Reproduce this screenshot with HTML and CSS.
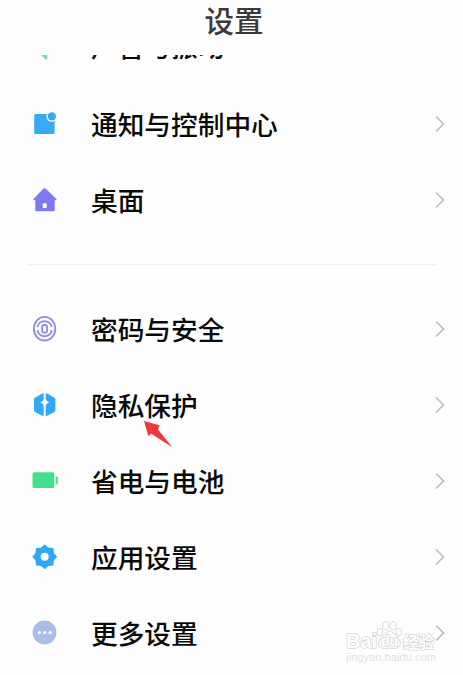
FILE: index.html
```html
<!DOCTYPE html>
<html lang="zh-CN">
  <head>
    <meta charset="UTF-8" />
    <title>设置</title>
    <link rel="stylesheet" href="styles.css">
  </head>
  <body>
    <header class="app-header">
      <h1 class="app-title">设置</h1>
    </header>

    <main class="settings">
      <div class="row row-scrolled">
        <svg class="icon" viewBox="0 0 30 30"><path fill="#6be3a0" d="M3 11h5l9-8v23.500q-1 .6-1.800-.2L9.500 20H3z" /></svg>
        <span class="label">声音与振动</span>
      </div>
      <div class="row">
        <svg class="icon" viewBox="0 0 30 30">
          <rect x="4.200" y="5" width="20.400" height="20" rx="1.500" fill="#38a9f5" />
          <circle cx="21.800" cy="7.400" r="5.400" fill="#fff" />
          <circle cx="21.800" cy="7.400" r="4.200" fill="#38a9f5" />
        </svg>
        <span class="label">通知与控制中心</span>
        <svg class="chevron" viewBox="0 0 10 18"><path d="M1 1.500 8.500 9 1 16.500" /></svg>
      </div>
      <div class="row">
        <svg class="icon" viewBox="0 0 30 30">
          <path fill="#7c79f2" d="M13.500 3.600q1-.8 2 0L26.500 14q.6 1.200-.8 1.200h-1V25q0 1.300-1.300 1.300H6.600Q5.300 26.300 5.300 25v-9.800h-1q-1.600 0-.8-1.200z" />
          <rect x="12.700" y="18.300" width="4" height="4.700" rx=".8" fill="#fff" />
        </svg>
        <span class="label">桌面</span>
        <svg class="chevron" viewBox="0 0 10 18"><path d="M1 1.500 8.500 9 1 16.500" /></svg>
      </div>

      <hr class="divider" />

      <div class="row">
        <svg class="icon" viewBox="0 0 30 30" fill="none" stroke="#958fdf">
          <ellipse cx="14.600" cy="14.700" rx="10.700" ry="11.800" stroke-width="1.900" />
          <path stroke-width="1.900" d="M7.500 13.200C8.200 5.200 21 5.200 21.700 13.200M7.500 16.200C8.200 24.200 21 24.200 21.700 16.200" />
          <rect x="12.100" y="10.700" width="5" height="8" rx="2.500" stroke-width="2" />
        </svg>
        <span class="label">密码与安全</span>
        <svg class="chevron" viewBox="0 0 10 18"><path d="M1 1.500 8.500 9 1 16.500" /></svg>
      </div>
      <div class="row">
        <svg class="icon" viewBox="0 0 30 30">
          <path fill="#2fa9f4" d="M13.700 3.200v5.500q-.5 3-3.500 3.800 3 .8 3.500 3.800v10.200L5 21.900q-1-.6-1-1.800V9.600q0-1.200 1-1.800l6.700-4.100z" />
          <path fill="#2fa9f4" d="M15.700 3.200v5.500q.5 3 3.500 3.800-3 .8-3.500 3.800v10.200l8.700-4.600q1-.6 1-1.800V9.600q0-1.200-1-1.800l-6.700-4.100z" />
        </svg>
        <span class="label">隐私保护</span>
        <svg class="chevron" viewBox="0 0 10 18"><path d="M1 1.500 8.500 9 1 16.500" /></svg>
        <svg class="pointer" viewBox="0 0 30 28"><path d="M1 1 16.500 5.300 15 9.500 29.300 27.200 8.300 13.700 5.300 16z" /></svg>
      </div>
      <div class="row">
        <svg class="icon" viewBox="0 0 30 30" fill="#45df8b">
          <rect x="2.500" y="6.200" width="21.700" height="15.800" rx="1.500" />
          <rect x="25.700" y="10.400" width="2" height="8" rx=".8" />
        </svg>
        <span class="label">省电与电池</span>
        <svg class="chevron" viewBox="0 0 10 18"><path d="M1 1.500 8.500 9 1 16.500" /></svg>
      </div>
      <div class="row">
        <svg class="icon" viewBox="0 0 30 30">
          <path fill="#32a6f3" stroke="#32a6f3" stroke-width="1.500" stroke-linejoin="round" d="M14.700 3.200 18 6.200 22.700 6.700 23.200 11.400 26.200 14.700 23.200 18 22.700 22.700 18 23.200 14.700 26.200 11.400 23.200 6.700 22.700 6.200 18 3.200 14.700 6.200 11.400 6.700 6.700 11.400 6.200z" />
          <circle cx="14.700" cy="14.700" r="4" fill="#fff" />
        </svg>
        <span class="label">应用设置</span>
        <svg class="chevron" viewBox="0 0 10 18"><path d="M1 1.500 8.500 9 1 16.500" /></svg>
      </div>
      <div class="row">
        <svg class="icon" viewBox="0 0 30 30">
          <circle cx="14.500" cy="14.500" r="11.900" fill="#a9bcea" />
          <g fill="#fff">
            <circle cx="9.300" cy="14.600" r="1.600" />
            <circle cx="14.700" cy="14.600" r="1.600" />
            <circle cx="20.100" cy="14.600" r="1.600" />
          </g>
        </svg>
        <span class="label">更多设置</span>
        <svg class="chevron" viewBox="0 0 10 18"><path d="M1 1.500 8.500 9 1 16.500" /></svg>
      </div>
    </main>

    <div class="watermark">
      <div class="brand">
        <span class="brand-bai">Bai</span>
        <span class="paw">
          <svg class="paw-shape" viewBox="0 0 28 30">
            <ellipse cx="4" cy="12" rx="2.900" ry="4" />
            <ellipse cx="10" cy="5.300" rx="3" ry="4.300" />
            <ellipse cx="17.700" cy="5.300" rx="3" ry="4.300" />
            <ellipse cx="23.500" cy="12" rx="2.900" ry="4" />
            <path d="M14 11c-4 0-5 4-8 6.500-6 5-3 12 3 11.500 4-.5 6-.5 10 0 6 .5 9-6.500 3-11.500C19 15 18 11 14 11z" />
          </svg>
          <span class="brand-du">du</span>
        </span>
        <span class="brand-cn">经验</span>
      </div>
      <div class="brand-url">jingyan.baidu.com</div>
    </div>
  </body>
</html>
```
FILE: styles.css
```css
* {
  margin: 0;
  padding: 0;
  box-sizing: border-box;
}

body {
  height: 675px;
  overflow: hidden;
  background: #fefefe;
  color: #0a0a0a;
  font-family: "Noto Sans CJK SC", sans-serif;
}

.app-header {
  display: flex;
  justify-content: center;
  height: 55px;
  padding-left: 5px;
}

.app-title {
  font-size: 29.5px;
  font-weight: 500;
  line-height: 39px;
  color: #3a3a3a;
}

.settings {
  height: 620px;
  overflow: hidden;
}

.row {
  position: relative;
  display: flex;
  align-items: center;
  height: 76px;
  padding: 0 18px 0 30px;
}

/* first row is half hidden under the header */
.row-scrolled {
  margin-top: -45px;
}

.row-scrolled .label {
  padding-bottom: 5px;
}

.icon {
  width: 30px;
  height: 30px;
  margin-right: 31px;
}

.label {
  flex: 1;
  padding-bottom: 2px;
  font-size: 26.7px;
  font-weight: 500;
  line-height: 37px;
}

.chevron {
  width: 10px;
  height: 18px;
  fill: none;
  stroke: #bdbdbd;
  stroke-width: 1.6;
}

.divider {
  height: 1px;
  margin: 26px 27px 26px 28px;
  border: none;
  background: #f1f1f1;
}

/* red arrow lying over the row */
.pointer {
  position: absolute;
  left: 143px;
  top: 53px;
  width: 30px;
  height: 28px;
  fill: #ea3a3c;
  z-index: 1;
}

.watermark {
  position: absolute;
  left: 346px;
  top: 620px;
  width: 94px;
  color: #fff;
}

.brand {
  display: flex;
  align-items: flex-end;
  height: 30px;
  -webkit-text-stroke: 1.4px #d6d6d6;
  paint-order: stroke fill;
}

.brand-bai {
  width: 30px;
  font: bold 20px/18px "Liberation Sans", sans-serif;
}

.paw {
  position: relative;
  width: 27px;
  height: 30px;
}

.paw-shape {
  width: 27px;
  height: 30px;
  fill: #fff;
  stroke: #d2d2d2;
  stroke-width: 0.9;
  paint-order: normal;
}

.brand-du {
  position: absolute;
  left: 5px;
  bottom: 2px;
  font: bold 14px/14px "Liberation Sans", sans-serif;
}

.brand-cn {
  font-size: 15.5px;
  font-weight: 700;
  line-height: 17px;
}

.brand-url {
  font: 11.2px/14px "Liberation Sans", sans-serif;
  color: #e2e2e2;
}
```
